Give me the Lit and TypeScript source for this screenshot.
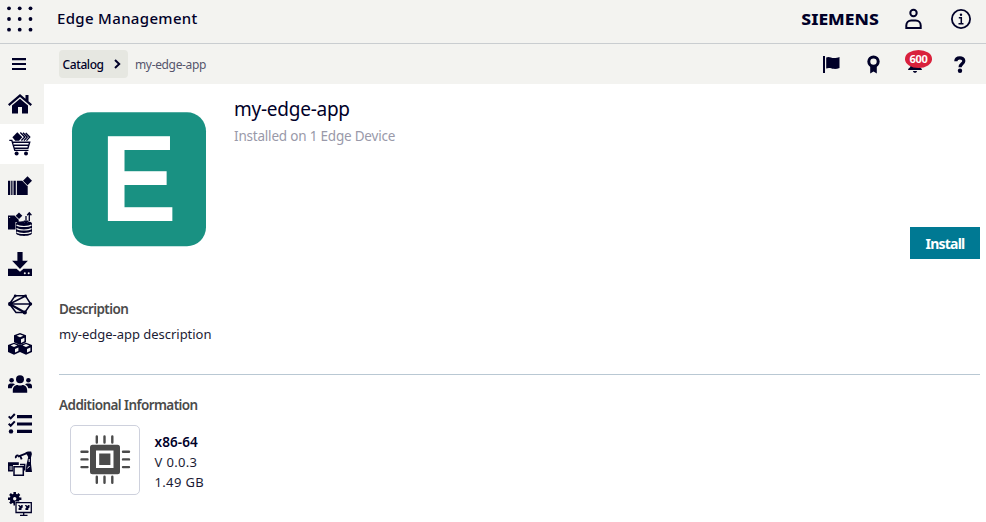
import { LitElement, html, css, svg } from "lit";
import { customElement } from "lit/decorators.js";
import { classMap } from "lit/directives/class-map.js";

const cube = (x: number, y: number) => svg`
  <g transform="translate(${x} ${y})">
    <path d="M6 0 12 2.300V9.200L6 12 0 9.200V2.300z"/>
    <path class="cut" d="M6 1.400 9.400 2.800 6 4.200 2.600 2.800zM7 6.200l3.400-1.500v3.500L7 9.900z"/>
  </g>`;

const navIcons = [
  { name: "Home", art: svg`<path d="M12 2 0 12.3l1.4 1.6L12 5l10.6 8.9 1.4-1.6L20.500 9.200V3h-3v3.700z"/><path d="M12 6.800 4 13.500v7.900h6V15h4v6.400h6v-7.900z"/>` },
  { name: "Catalog", active: true, art: svg`
      <path d="m9.300.3 5 4.900-3.300 3.500H7.200L4.400 5.200z"/>
      <path class="line" stroke-width="1.400" d="m12.300.6 4.500 4.500-3.400 3.500M15 .7l4.200 4.400L16 8.600M17.700 1l4 4.100-3.200 3.500"/>
      <path class="line" stroke-width="1.400" d="M1.300 8.400h2.500l3 10h13.700M4.600 10.300h17.100l-1.800 6H6.500M6 13.200h14.500"/>
      <circle cx="8.600" cy="21.600" r="2"/><circle cx="18" cy="21.600" r="2"/>` },
  { name: "My installed apps", art: svg`
      <path d="M0 8.700h2.300V23H0zM3.200 8.700h1.300V23H3.200zM5.500 8.700h2.300V23H5.500zM8.900 8.700h5.300l4.800 5h.700V23H8.900z"/>
      <path d="m19.500 4.300 4.500 4.500-4.500 4.500L15 8.800z"/>` },
  { name: "App projects", art: svg`
      <path d="M0 3.600h6.500L10.700 7.800v2.200H7.500v7.500H0z"/>
      <path class="cut" d="M1.200 5h.9v.9h-.9z"/>
      <path d="m11 .4 3.300 3.300L11 7 7.700 3.700z"/>
      <path d="M8 11.500c0-1.600 3.400-2.300 8-2.300s8 .7 8 2.300v9.600c0 1.700-3.600 2.900-8 2.900s-8-1.200-8-2.900z"/>
      <path class="cutline" stroke-width="1.100" d="M8.500 13c3 2 12 2 15 0M8.500 16.500c3 2 12 2 15 0M8.500 20c3 2 12 2 15 0"/>
      <path class="cutline" stroke-width="3" d="M18 4v6.500M21.300 9V3"/>
      <path class="line" stroke-width="1.300" d="M18 4v7M15.900 8.600 18 11l2.100-2.400M21.300 9V1M19.200 3.200 21.300.8l2.100 2.400"/>` },
  { name: "Downloads", art: svg`
      <path d="M9.400 0h5.200v8.700h5.300L12 17 4.100 8.700h5.300z"/>
      <path d="M0 16.700h8.500l3.500 3 3.500-3H24V24H0z"/>
      <circle class="cut" cx="16.800" cy="21.200" r="1"/><circle class="cut" cx="20.700" cy="21.200" r="1"/>` },
  { name: "Connectors", art: svg`
      <path class="line" stroke-width="1.500" stroke-linejoin="round" d="M1.500 12 7 3.800h10.500L22.700 12l-5.900 8.500H8zM1.500 12h21M1.500 12l16-8M1.500 12 7 3.800"/>
      <path class="line" stroke-width="2.200" d="m1.500 12 15.300 8.500"/>
      <circle cx="2.200" cy="12" r="2.200"/><circle cx="7.200" cy="4" r="1.400"/><circle cx="17.500" cy="4" r="1.400"/><circle cx="22.500" cy="12" r="1.700"/><circle cx="16.800" cy="20.500" r="2.100"/>` },
  { name: "Device types", art: svg`${cube(6, 1)}${cube(0, 10.700)}${cube(12, 10.700)}` },
  { name: "Users", art: svg`
      <circle cx="12" cy="7.300" r="4"/><circle cx="3.600" cy="8.300" r="2.300"/><circle cx="20.400" cy="8.300" r="2.300"/>
      <path d="M4.800 20.700v-2.200c0-3.300 2-5.500 4.800-5.500 1.500.8 3.300.8 4.800 0 2.800 0 4.800 2.200 4.800 5.500v2.200zM0 16.300V14c0-1.600 1-2.600 2.400-2.600h2.500c.8 0 1.600.4 2 1-1.700.8-2.900 2.200-3.200 3.900zM24 16.300V14c0-1.600-1-2.600-2.400-2.600h-2.500c-.8 0-1.600.4-2 1 1.700.8 2.900 2.200 3.200 3.900z"/>` },
  { name: "Jobs", art: svg`
      <path d="M9 3h15v3.200H9zM9 10.400h15v3.200H9zM9 17.700h15V21H9z"/>
      <path class="line" stroke-width="2" d="m.7 4.400 2 2L6.800 2M.7 11.800l2 2 4.100-4.400"/><circle cx="3" cy="19.400" r="2.200"/>` },
  { name: "Machines", art: svg`
      <path d="M0 10.300h10.800v2.700H5v6.600H0z"/><path class="cutline" d="M1.500 15h3M1.500 17h3"/>
      <path class="line" stroke-width="1.900" d="m10 4.600 9-3.400M8 6.200c-.8-1.700.4-3.200 2.400-2.500M12.500 4.600l1.200 2.800"/>
      <path d="M17.500.2 20-.6h3.200l.7 2.600-.9 3.500V12l1 8H17.500l.8-6.500L20.200 5z"/>
      <path class="cutline" d="m19.300 16.500 2.300-2.500M21.200 7v3"/>
      <path class="cut" d="M5.300 13.700h10.700v10.200H5.300z"/>
      <path class="line" stroke-width="1.500" d="M6 14.800h9.300v8.400H6zM12 12.500h4.700v6"/>` },
  { name: "Settings", art: svg`
      <path class="line" stroke-width="2.500" d="M6.700 0v13.400M0 6.700h13.400M2 2l9.400 9.400M11.400 2 2 11.400"/>
      <circle cx="6.700" cy="6.700" r="4.900"/><circle class="cut" cx="6.700" cy="6.700" r="1.700"/>
      <path class="cut" d="M7 9.500h17V24H7z"/>
      <path class="line" stroke-width="1.300" d="M8 10.700h15.300v9.800H8zM15.700 20.500v2.700M12 23.300h7.500"/>
      <path d="M10 13h1.500l.8 1 1.400-1h1v2.500l-1.200 1v1.500h-2.900v-1.700l1-.8zM16.800 13h1.500l.8 1 1.400-1h1v2.500l-1.200 1v1.500h-2.900v-1.700l1-.8z"/>` },
];

@customElement("app-root")
export class AppRoot extends LitElement {
  static styles = css`
    :host { display: grid; grid-template-rows: 44px 478px; height: 522px; overflow: hidden; background: #fff; color: #000028; font-family: "Noto Sans", sans-serif; }
    * { box-sizing: border-box; }
    svg { display: block; fill: #000028; overflow: visible; flex: none; }
    .line { fill: none; stroke: #000028; }
    .cut { fill: #f3f3f0; }
    .cutline { fill: none; stroke: #f3f3f0; }
    h1, h2, p { margin: 0; white-space: nowrap; }
    .header { display: flex; align-items: center; background: #f3f3f0; border-bottom: 1px solid #c9cdd0; padding: 0 15.500px 5px 7px; }
    .product { margin: -2px 0 0 25px; font-size: 15px; line-height: 20px; font-weight: 500; letter-spacing: .33px; }
    .brand { margin-left: auto; margin-right: 27px; }
    .brand text { font-weight: 800; font-size: 15.500px; }
    .person { margin-right: 28.500px; }
    .body { display: grid; grid-template-columns: 44px 1fr; }
    .side { background: #f3f3f0; }
    .cell { height: 40px; padding: 8px; }
    .active { background: #fff; }
    .active .cut { fill: #fff; }
    .main { display: grid; grid-template-rows: 40px 1fr; min-width: 0; }
    .bar { background: #f3f3f0; display: flex; align-items: center; padding: 0 20px 0 15px; font-size: 12px; }
    .crumb { display: flex; align-items: center; width: 69px; height: 28px; border-radius: 4px; background: #e6e7e1; padding: 0 7px 0 3.500px; justify-content: space-between; font-weight: 500; letter-spacing: -.4px; }
    .current { margin-left: 7px; color: #55556c; letter-spacing: -.35px; }
    .tools { display: flex; align-items: center; margin-left: auto; }
    .award { margin-left: 27px; }
    .bell { position: relative; margin: 0 22px 0 25px; width: 27px; height: 22px; }
    .count { position: absolute; left: 0; top: -3px; width: 27px; height: 17.500px; border-radius: 50%; background: #d9213c; color: #fff; font-size: 11px; line-height: 17px; font-weight: 700; letter-spacing: -.3px; text-align: center; }
    .bell svg { position: absolute; left: 3px; top: 2px; }
    .content { padding: 0 6px 0 15px; }
    .hero { display: flex; height: 216px; padding: 28px 0 0 13px; }
    .logo { fill: #199182; }
    .logo text { fill: #fff; font: 700 122.500px "Liberation Sans", sans-serif; }
    .intro { margin: -16px 0 0 28px; flex: 1; }
    h1 { font-size: 19px; line-height: 26px; font-weight: 400; letter-spacing: -.25px; }
    .status { color: #9999a9; font-size: 13.500px; line-height: 18px; margin-top: 5px; letter-spacing: -.2px; }
    .install { align-self: flex-start; margin-top: 115px; width: 70px; height: 32px; border: 0; padding: 0; background: #007993; color: #fff; font: 700 14px "Noto Sans", sans-serif; letter-spacing: -.8px; }
    h2 { color: #4b4b4b; font-size: 13.500px; line-height: 18px; font-weight: 600; letter-spacing: -.57px; }
    .description { font-size: 13px; line-height: 18px; margin-top: 7px; color: #1c1c35; letter-spacing: -.02px; }
    .divider { height: 1px; background: #b9c8d3; margin: 31px 0 21px; }
    .arch { display: flex; margin: 11px 0 0 11px; }
    .chip { width: 70px; height: 70px; border: 1px solid #ced1dd; border-radius: 5px; }
    .chip svg { margin: -1px; fill: #4b4b4b; }
    .pins { fill: none; stroke: #4b4b4b; stroke-width: 2.400; stroke-linecap: round; }
    .hole { fill: #fff; }
    .facts { margin: 7px 0 0 14.500px; font-size: 13px; line-height: 20px; }
    .facts p { color: #1c1c35; letter-spacing: .35px; }
    .facts .name { color: #000028; font-weight: 600; font-size: 13.500px; letter-spacing: .1px; }
  `;

  render() {
    return html`
      <header class="header">
        <svg width="25" height="26" viewBox="0 0 25 26">${[2, 12.700, 23.500].map((x) => [2.300, 13, 23.700].map((y) => svg`<circle cx=${x} cy=${y} r="1.900"/>`))}</svg>
        <span class="product">Edge Management</span>
        <svg class="brand" width="77" height="16"><text x=".3" y="13.500" textLength="77.500" lengthAdjust="spacingAndGlyphs">SIEMENS</text></svg>
        <svg class="person" width="17" height="20" viewBox="0 0 17 20"><circle class="line" stroke-width="2" cx="8.500" cy="4" r="3.200"/><path class="line" stroke-width="2" d="M1.300 19v-2.500c0-3 2-5.100 5-5.100h4.400c3 0 5 2.100 5 5.100V19z"/></svg>
        <svg width="20" height="20" viewBox="0 0 20 20"><circle class="line" stroke-width="1.800" cx="10" cy="10" r="9.100"/><circle cx="10" cy="5.800" r="1.200"/><path class="line" stroke-width="1.500" d="M7.800 8.700h2.500v6M7.500 14.700h5"/></svg>
      </header>
      <div class="body">
        <nav class="side">
          <div class="cell"><svg width="24" height="24"><path d="M4 6h14v2.200H4zM4 10.900h14v2.200H4zM4 15.900h14v2.200H4z"/></svg></div>
          ${navIcons.map((i) => html`<div class=${classMap({ cell: true, active: !!i.active })} aria-label=${i.name}><svg width="24" height="24" viewBox="0 0 24 24">${i.art}</svg></div>`)}
        </nav>
        <div class="main">
          <div class="bar">
            <span class="crumb">Catalog<svg width="7" height="10"><path class="line" stroke-width="2" d="m1 1 4.200 4L1 9"/></svg></span>
            <span class="current">my-edge-app</span>
            <div class="tools">
              <svg width="17" height="17"><path d="M0 0h2v17H0zM3.200 1.500c3-1.700 5 .8 8 .6 2 0 3.500-.6 5.300-1.200v11c-2 .7-4 1.300-6 .9-2.500-.5-4.500-1.600-7.300-.3z"/></svg>
              <svg class="award" width="13" height="19" viewBox="0 0 13 19"><circle class="line" stroke-width="3" cx="6.500" cy="6.600" r="4.700"/><path d="M3.200 10.500h6.600v8l-3.300-2-3.300 2z"/></svg>
              <div class="bell"><svg width="14" height="18"><path d="M7 3C3 3 2.500 8 2.500 11c0 2-2.500 2-2.500 4h14c0-2-2.500-2-2.500-4 0-3-.5-8-4.500-8zM5 16h4c0 2.400-4 2.400-4 0z"/></svg><span class="count">600</span></div>
              <svg width="12" height="17" viewBox="0 0 12 17"><path class="line" stroke-width="3.200" d="M1.800 5.200C2 .7 9.800.7 9.800 5c0 2.800-3.700 2.700-3.700 6.200"/><circle cx="6" cy="14.700" r="2.200"/></svg>
            </div>
          </div>
          <main class="content">
            <section class="hero">
              <svg class="logo" width="134" height="134"><rect y=".300" width="134" height="134" rx="19"/><text x="28.300" y="108.500" textLength="76.500" lengthAdjust="spacingAndGlyphs">E</text></svg>
              <div class="intro"><h1>my-edge-app</h1><p class="status">Installed on 1 Edge Device</p></div>
              <button class="install">Install</button>
            </section>
            <h2>Description</h2>
            <p class="description">my-edge-app description</p>
            <div class="divider"></div>
            <h2>Additional Information</h2>
            <div class="arch">
              <div class="chip"><svg width="70" height="70"><rect x="20" y="19.700" width="30" height="29.600" rx="2.500"/><path class="hole" d="M26 25.500h17.500v17.500H26z"/><path d="M29.200 28.500h11.200V40H29.200z"/><path class="pins" d="M26.800 11.500v6M34.500 11.500v6M42.300 11.500v6M26.800 51.700v6M34.500 51.700v6M42.300 51.700v6M11.500 26.700h6M11.500 34.400h6M11.500 42.100h6M53 26.700h6M53 34.400h6M53 42.100h6"/></svg></div>
              <div class="facts"><p class="name">x86-64</p><p>V 0.0.3</p><p>1.49 GB</p></div>
            </div>
          </main>
        </div>
      </div>`;
  }
}
